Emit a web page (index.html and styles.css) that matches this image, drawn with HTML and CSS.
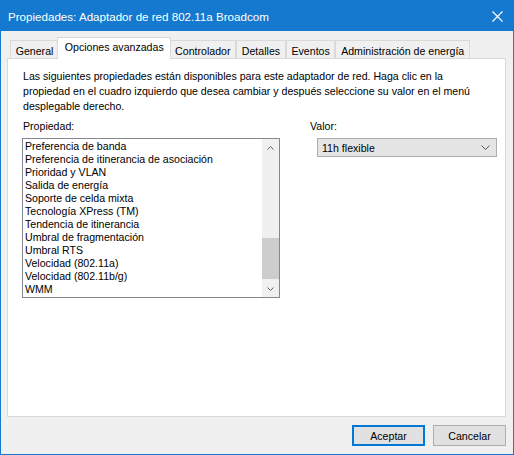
FILE: index.html
```html
<!DOCTYPE html>
<html lang="es">
<head>
<meta charset="utf-8">
<title>Propiedades: Adaptador de red 802.11a Broadcom</title>
<link rel="stylesheet" href="styles.css">
</head>
<body>
<div class="window">
  <div class="titlebar">
    <span class="title">Propiedades: Adaptador de red 802.11a Broadcom</span>
    <svg class="close" width="11" height="11" viewBox="0 0 11 11"><path d="M0.5 0.5 L10.5 10.5 M10.5 0.5 L0.5 10.5" stroke="#fff" stroke-width="1.1" fill="none"/></svg>
  </div>
  <div class="client">
    <div class="tabs">
      <div class="tab">General</div>
      <div class="tab active">Opciones avanzadas</div>
      <div class="tab">Controlador</div>
      <div class="tab">Detalles</div>
      <div class="tab">Eventos</div>
      <div class="tab">Administración de energía</div>
    </div>
    <div class="panel">
      <p class="desc">Las siguientes propiedades están disponibles para este adaptador de red. Haga clic en la<br>propiedad en el cuadro izquierdo que desea cambiar y después seleccione su valor en el menú<br>desplegable derecho.</p>
      <div class="props">
        <div class="col-left">
          <div class="label">Propiedad:</div>
          <div class="listbox">
            <ul class="items">
              <li>Preferencia de banda</li>
              <li>Preferencia de itinerancia de asociación</li>
              <li>Prioridad y VLAN</li>
              <li>Salida de energía</li>
              <li>Soporte de celda mixta</li>
              <li>Tecnología XPress (TM)</li>
              <li>Tendencia de itinerancia</li>
              <li>Umbral de fragmentación</li>
              <li>Umbral RTS</li>
              <li>Velocidad (802.11a)</li>
              <li>Velocidad (802.11b/g)</li>
              <li>WMM</li>
            </ul>
            <div class="scrollbar">
              <div class="arrow"><svg width="7" height="4" viewBox="0 0 7 4"><path d="M0.5 3.5 L3.5 0.5 L6.5 3.5" stroke="#606060" fill="none"/></svg></div>
              <div class="track"><div class="thumb"></div></div>
              <div class="arrow"><svg width="7" height="4" viewBox="0 0 7 4"><path d="M0.5 0.5 L3.5 3.5 L6.5 0.5" stroke="#606060" fill="none"/></svg></div>
            </div>
          </div>
        </div>
        <div class="col-right">
          <div class="label">Valor:</div>
          <div class="combo">
            <span>11h flexible</span>
            <svg width="9" height="5" viewBox="0 0 9 5"><path d="M0.5 0.5 L4.5 4.5 L8.5 0.5" stroke="#555" fill="none"/></svg>
          </div>
        </div>
      </div>
    </div>
    <div class="buttons">
      <button class="btn default">Aceptar</button>
      <button class="btn">Cancelar</button>
    </div>
  </div>
</div>
</body>
</html>
```
FILE: styles.css
```css
html, body {
  margin: 0;
  padding: 0;
  background: #ffffff;
}

.window {
  width: 514px;
  height: 455px;
  box-sizing: border-box;
  border: 1px solid #1479cf;
  display: flex;
  flex-direction: column;
  font-family: "Liberation Sans", Arial, sans-serif;
  font-size: 10.6px;
  color: #000;
}

.titlebar {
  flex: none;
  height: 30px;
  background: #1479cf;
  color: #fff;
  display: flex;
  align-items: center;
  justify-content: space-between;
  padding: 0 10px 0 7px;
}

.title {
  font-size: 11.6px;
}

.close {
  display: block;
}

.client {
  flex: 1;
  background: #f0f0f0;
  padding: 6px 7px 0 6px;
  display: flex;
  flex-direction: column;
}

.tabs {
  flex: none;
  display: flex;
  align-items: flex-end;
  height: 22px;
  margin-bottom: -1px;
  padding-left: 3px;
}

.tab {
  height: 18px;
  box-sizing: border-box;
  border: 1px solid #d9d9d9;
  border-bottom: none;
  padding: 4px 4.7px 0;
  margin-bottom: 1px;
  background: #f0f0f0;
  line-height: 13px;
  white-space: nowrap;
}

.tab.active {
  height: 22px;
  margin: 0 -2px;
  padding: 3px 6.7px 0;
  background: #fff;
  position: relative;
  z-index: 1;
}

.panel {
  flex: none;
  height: 359px;
  box-sizing: border-box;
  border: 1px solid #d9d9d9;
  background: #fff;
  padding: 10px 7px 0 14px;
}

.desc {
  margin: 0 0 0 1px;
  line-height: 15px;
}

.props {
  display: flex;
  margin-top: 5px;
}

.col-left {
  flex: none;
  width: 258px;
}

.label {
  height: 15px;
  line-height: 15px;
  margin: 0 0 4px 1px;
}

.listbox {
  height: 160px;
  box-sizing: border-box;
  border: 1px solid #828790;
  display: flex;
}

.items {
  flex: 1;
  list-style: none;
  margin: 0;
  padding: 1px 0 0 2px;
  line-height: 13px;
}

.scrollbar {
  flex: none;
  width: 17px;
  display: flex;
  flex-direction: column;
  background: #f0f0f0;
}

.arrow {
  height: 17px;
  display: flex;
  align-items: center;
  justify-content: center;
}

.arrow svg {
  display: block;
}

.track {
  flex: 1;
  display: flex;
  flex-direction: column;
  justify-content: flex-end;
  padding-bottom: 1px;
}

.thumb {
  height: 41px;
  background: #cdcdcd;
}

.col-right {
  flex: none;
  margin-left: 29px;
}

.combo {
  margin: 3px 0 0 8px;
  width: 180px;
  height: 19px;
  box-sizing: border-box;
  border: 1px solid #adadad;
  background: #e5e5e5;
  display: flex;
  align-items: center;
  justify-content: space-between;
  padding: 0 6px 0 4px;
}

.combo svg {
  display: block;
}

.buttons {
  display: flex;
  justify-content: flex-end;
  gap: 8px;
  margin-top: 8px;
}

.btn {
  width: 73px;
  height: 21px;
  box-sizing: border-box;
  border: 1px solid #adadad;
  background: #e1e1e1;
  font-family: inherit;
  font-size: inherit;
  color: #000;
  padding: 0;
}

.btn.default {
  border-color: #0078d7;
  box-shadow: inset 0 0 0 1px #0078d7;
}
```
